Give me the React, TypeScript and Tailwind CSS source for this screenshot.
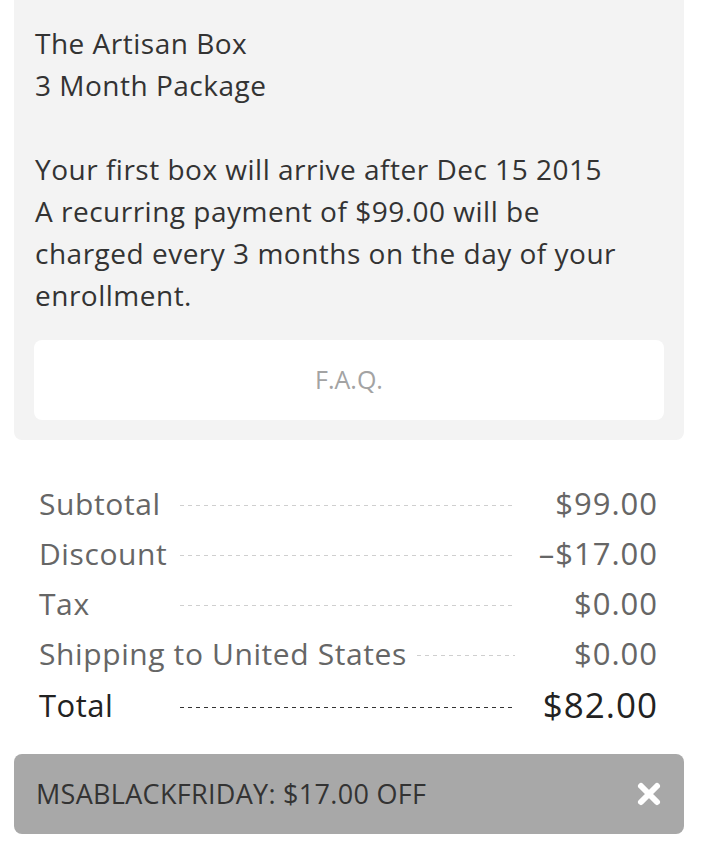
import React from 'react'

const rows = [
  { label: 'Subtotal', value: '$99.00' },
  { label: 'Discount', value: '–$17.00' },
  { label: 'Tax', value: '$0.00' },
  { label: 'Shipping to United States', value: '$0.00' },
]

function Dots({ dark }: { dark?: boolean }) {
  return (
    <div
      className={
        dark
          ? 'mx-[10px] mt-[4px] h-px flex-1 bg-[linear-gradient(to_right,#333_55%,transparent_55%)] bg-[length:8px_1px] bg-repeat-x'
          : 'mx-[10px] mt-[4px] h-px flex-1 bg-[linear-gradient(to_right,#cfcfcf_55%,transparent_55%)] bg-[length:8px_1px] bg-repeat-x'
      }
    />
  )
}

export default function App() {
  return (
    <div className="h-[852px] w-[704px] overflow-hidden bg-white font-['Open_Sans',sans-serif]">
      {/* box details */}
      <div className="ml-[14px] mr-[20px] rounded-b-lg bg-[#f3f3f3] px-[20px] pb-[20px] pt-[22px]">
        <div className="whitespace-nowrap px-[1px] text-[28px] leading-[42px] tracking-[0.5px] text-[#333]">
          <p>The Artisan Box</p>
          <p>3 Month Package</p>
          <p className="mt-[42px]">Your first box will arrive after Dec 15 2015</p>
          <p>
            A recurring payment of $99.00 will be
            <br />
            charged every 3 months on the day of your
            <br />
            enrollment.
          </p>
        </div>
        <button
          type="button"
          className="mt-[24px] flex h-[80px] w-full items-center justify-center rounded-lg bg-white text-[25px] text-[#a3a3a3]"
        >
          F.A.Q.
        </button>
      </div>

      {/* totals */}
      <div className="ml-[14px] mr-[20px] pl-[25px] pr-[26px] pt-[38px]">
        {rows.map((r) => (
          <div
            key={r.label}
            className="flex h-[50px] items-center text-[30px] tracking-[0.6px] text-[#666]"
          >
            <span className="min-w-[131px] whitespace-nowrap">{r.label}</span>
            <Dots />
            <span className="w-[133px] text-right text-[31px] tracking-[1px]">{r.value}</span>
          </div>
        ))}
        <div className="flex h-[54px] items-center tracking-[0.5px] text-[#222]">
          <span className="min-w-[131px] text-[31px]">Total</span>
          <Dots dark />
          <span className="w-[133px] text-right text-[35px] tracking-[1px]">$82.00</span>
        </div>
      </div>

      {/* coupon */}
      <div className="ml-[14px] mr-[20px] mt-[22px] flex h-[80px] items-center justify-between rounded-lg bg-[#a8a8a8] pl-[22px] pr-[22px]">
        <span className="text-[27px] tracking-[0.3px] text-[#333]">MSABLACKFRIDAY: $17.00 OFF</span>
        <svg width="26" height="26" viewBox="0 0 26 26">
          <path d="M5 5 L21 21 M21 5 L5 21" stroke="#fff" strokeWidth="6" strokeLinecap="round" />
        </svg>
      </div>
    </div>
  )
}
